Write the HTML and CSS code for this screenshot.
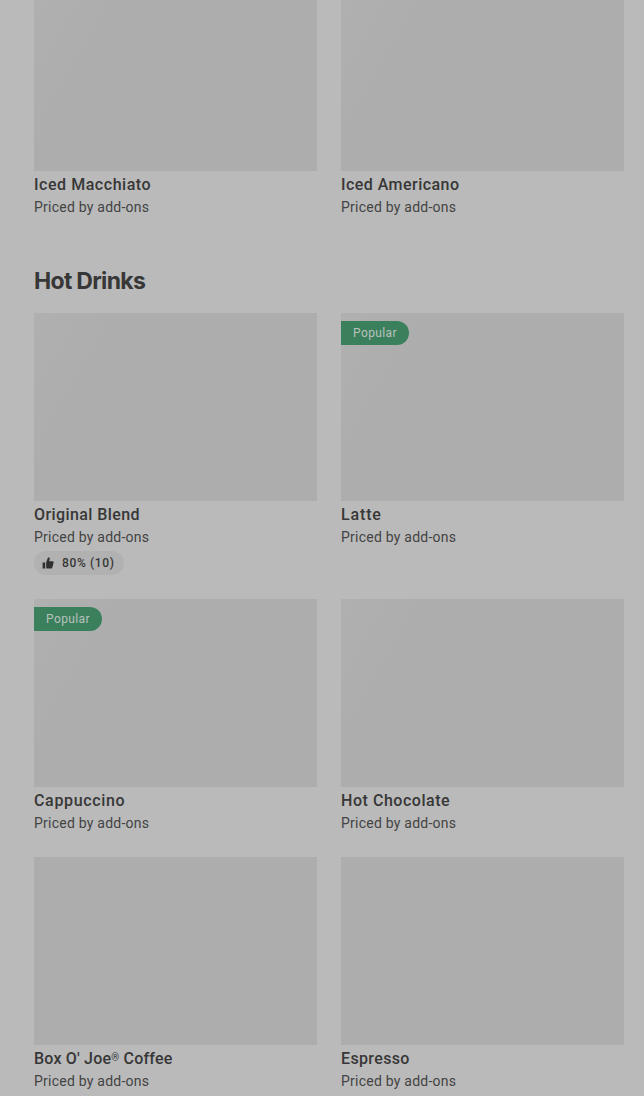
FILE: index.html
```html
<!DOCTYPE html>
<html lang="en">
<head>
<meta charset="utf-8">
<title>Menu</title>
<link rel="stylesheet" href="styles.css">
</head>
<body>
<main class="menu">
  <section class="grid first">
    <article class="card"><div class="photo lit"></div><h3 class="t-im">Iced Macchiato</h3><p>Priced by add-ons</p></article>
    <article class="card"><div class="photo lit"></div><h3 class="t-ia">Iced Americano</h3><p>Priced by add-ons</p></article>
  </section>
  <h2>Hot Drinks</h2>
  <section class="grid">
    <article class="card"><div class="photo lit"></div><h3 class="t-ob">Original Blend</h3><p>Priced by add-ons</p>
      <div class="rating"><svg viewBox="0 0 12 12" width="12" height="12"><path d="M.6 5.4h2.6v6.1H.6zM4.2 5.2 6 .4h.6c1 0 1.3.7 1.1 1.5l-.6 2.4h3.4c.9 0 1.3.7 1.1 1.4l-1.2 4.6c-.2.8-.7 1.2-1.5 1.2H4.2z"/></svg><span>80% (10)</span></div></article>
    <article class="card"><div class="photo lit"><span class="badge">Popular</span></div><h3 class="t-la">Latte</h3><p>Priced by add-ons</p></article>
    <article class="card"><div class="photo lit"><span class="badge">Popular</span></div><h3 class="t-ca">Cappuccino</h3><p>Priced by add-ons</p></article>
    <article class="card"><div class="photo lit"></div><h3 class="t-hc">Hot Chocolate</h3><p>Priced by add-ons</p></article>
    <article class="card"><div class="photo"></div><h3 class="t-bj">Box O' Joe<span class="reg">®</span> Coffee</h3><p>Priced by add-ons</p></article>
    <article class="card"><div class="photo"></div><h3 class="t-es">Espresso</h3><p>Priced by add-ons</p></article>
  </section>
</main>
</body>
</html>
```
FILE: styles.css
```css
* { box-sizing: border-box; margin: 0; padding: 0; }
body { background: #bababa; color: #373737; font-family: Roboto, "Liberation Sans", sans-serif; height: 1096px; overflow: hidden; }
.menu { padding: 0 20px 0 34px; }
.grid { display: grid; grid-template-columns: 283px 283px; column-gap: 24px; row-gap: 24px; }
.first .photo { height: 171px; }
.photo { height: 188px; background: #adadad; padding-top: 8px; }
.lit { background: linear-gradient(120deg, #b0b0b0 0%, #adadad 24%); }
h2 { font: 650 23px/32px Inter, sans-serif; letter-spacing: -.7px; margin: 48px 0 16px; }
h3 { font-size: 16px; font-weight: 500; line-height: 24px; margin-top: 2px; white-space: nowrap; }
.t-im { letter-spacing: .54px; }
.t-ia { letter-spacing: .45px; }
.t-ob { letter-spacing: .41px; }
.t-la { letter-spacing: .85px; }
.t-ca { letter-spacing: .66px; }
.t-hc { letter-spacing: .54px; }
.t-bj { letter-spacing: .2px; }
.t-es { letter-spacing: .36px; }
.reg { display: inline-block; font-size: 10px; line-height: 10px; vertical-align: 3px; }
p { font-size: 14px; line-height: 20px; letter-spacing: .23px; color: #434343; }
.rating { display: flex; align-items: center; gap: 8px; width: 90px; height: 24px; padding-left: 8px; margin-top: 4px; border-radius: 12px; background: #b1b1b1; font-size: 12px; font-weight: 500; letter-spacing: .65px; }
.rating svg { fill: #303030; }
.badge { display: block; width: 68px; height: 24px; padding-left: 12px; line-height: 24px; border-radius: 0 12px 12px 0; background: #3a805d; color: #b9c0bc; font-size: 12px; letter-spacing: .4px; }
```
